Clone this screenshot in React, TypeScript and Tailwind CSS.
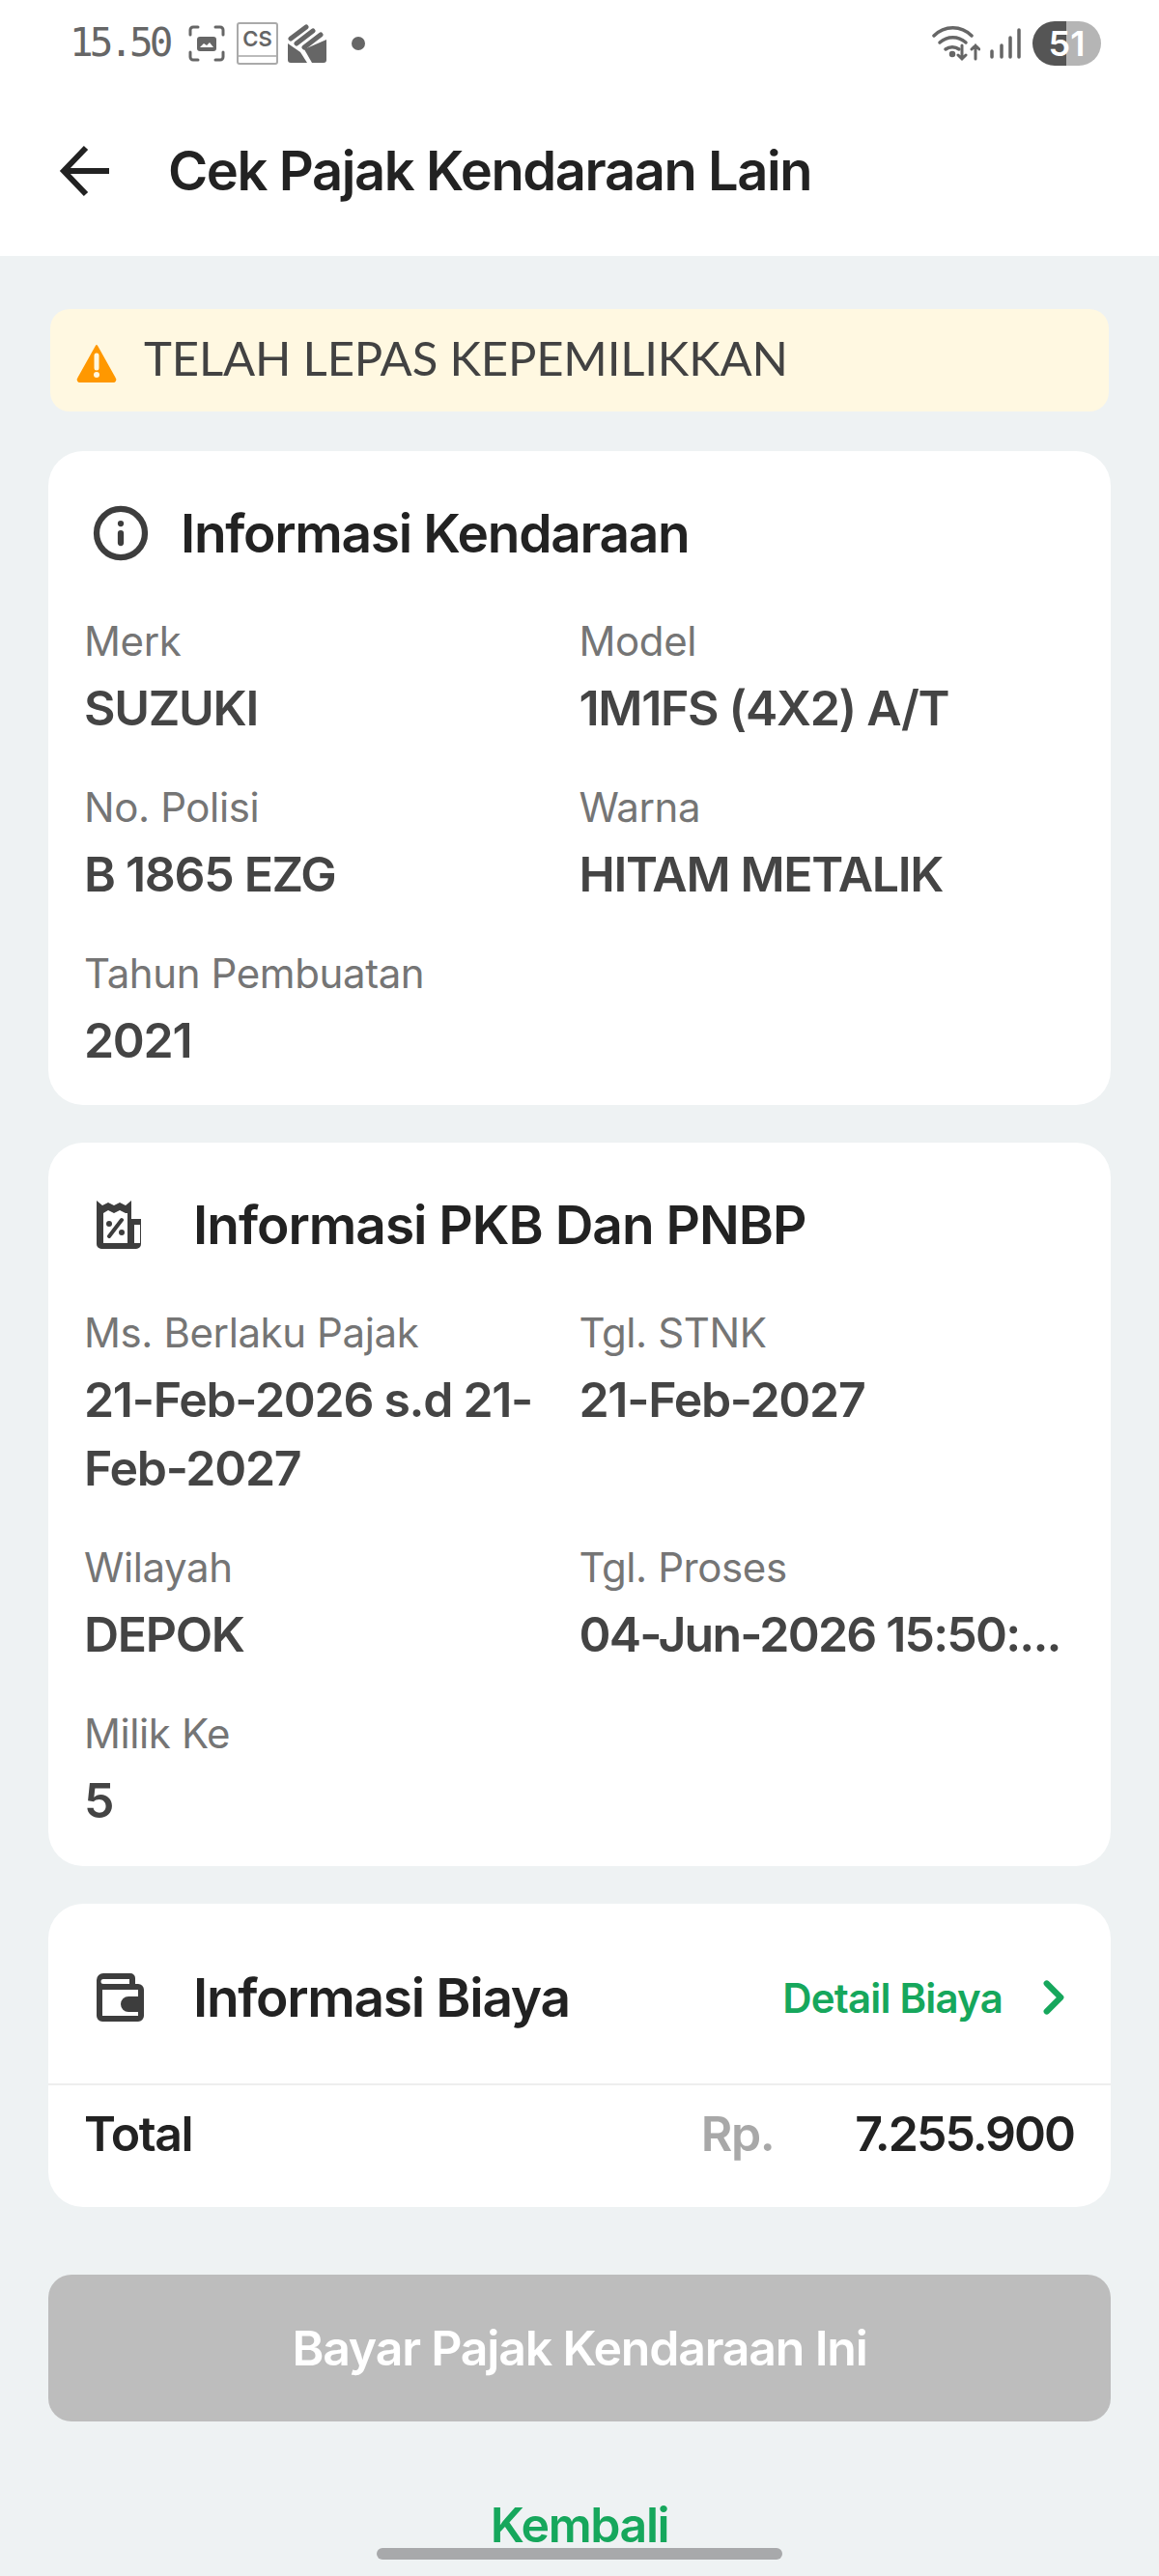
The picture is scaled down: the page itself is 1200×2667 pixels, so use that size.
import React from 'react';
import { ChevronRight, Info } from 'lucide-react';

const Field = ({ label, value, tight }: { label: string; value: string; tight?: boolean }) => (
  <div className="min-w-0">
    <div className="text-[42px] leading-[64px] tracking-[-0.4px] text-[#757575]">{label}</div>
    <div className={`mt-[2px] text-[50px] leading-[71px] font-semibold text-[#444444] ${tight ? 'tracking-[-1.8px]' : 'tracking-[-1.3px]'}`}>{value}</div>
  </div>
);

const StatusBar = () => (
  <div className="h-[90px] flex items-center justify-between pl-[72px] pr-[60px] text-[#666666]">
    <div className="flex items-center">
      <span className="-mt-[2px] text-[41px] leading-none font-['DejaVu_Sans_Mono',monospace] tracking-[-4px] w-[108px]">15.50</span>
      <svg width="38" height="38" viewBox="0 0 38 38" fill="none" className="ml-[15px]">
        <path d="M2 10V5a3 3 0 0 1 3-3h5M28 2h5a3 3 0 0 1 3 3v5M36 28v5a3 3 0 0 1-3 3h-5M10 36H5a3 3 0 0 1-3-3v-5" stroke="#666" strokeWidth="3" strokeLinecap="round" />
        <rect x="9" y="12" width="20" height="15" rx="3" fill="#666" />
        <path d="M12 23l4-4 3 2 3-3 4 5z" fill="#fff" />
      </svg>
      <div className="ml-[12px] w-[43px] h-[44px] border-2 border-[#aaaaaa] rounded-[3px] flex flex-col">
        <span className="h-[32px] text-[22px] leading-[30px] text-center font-semibold font-['Inter',sans-serif] text-[#666666]">CS</span>
        <span className="border-t-2 border-[#bbbbbb]" />
      </div>
      <svg width="40" height="40" viewBox="0 0 40 40" className="ml-[10px]">
        <path d="M0 20l13 9 7 11H3a3 3 0 0 1-3-3z" fill="#666" />
        <path d="M40 16v21a3 3 0 0 1-3 3H25l-8-14z" fill="#666" />
        <path d="M3 15L19 3M9 20L26 7M17 24L34 11" stroke="#666" strokeWidth="5" strokeLinecap="round" />
      </svg>
      <div className="ml-[26px] w-[14px] h-[14px] rounded-full bg-[#666666]" />
    </div>
    <div className="flex items-center">
      <svg width="50" height="38" viewBox="0 0 50 38" fill="none" stroke="#666" strokeWidth="3.5" strokeLinecap="round" className="mt-[2px]">
        <path d="M2 10C13-1 30-1 41 10" />
        <path d="M8 17c8-7 19-7 27 0" />
        <path d="M14 24c4-3 10-3 14 0" />
        <circle cx="21" cy="29" r="1.5" fill="#666" />
        <path d="M31 20v14M27 30l4 4 4-4M45 34V20M41 24l4-4 4 4" strokeWidth="3" />
      </svg>
      <svg width="32" height="32" viewBox="0 0 32 32" fill="none" stroke="#666" strokeWidth="3.5" strokeLinecap="round" className="ml-[10px]">
        <path d="M2 24v6M12 18v12M21 10v20M30 2v28" />
      </svg>
      <div className="ml-[12px] w-[71px] h-[46px] rounded-full overflow-hidden flex relative">
        <div className="w-[35px] bg-[#555555]" />
        <div className="flex-1 bg-[#b5b5b5]" />
        <span className="absolute inset-0 flex items-center justify-center text-[36px] font-semibold text-white font-['Inter',sans-serif]">51</span>
      </div>
    </div>
  </div>
);

export default function App() {
  return (
    <div className="relative w-[1200px] h-[2667px] overflow-hidden bg-[#eef2f3] font-['Inter',sans-serif]">
      <div className="bg-white h-[265px]">
        <StatusBar />
        <div className="h-[175px] flex items-start pt-[51px] pl-[60px]">
          <svg width="54" height="54" viewBox="0 0 54 54" fill="none" stroke="#222222" strokeWidth="6" className="shrink-0 mt-[9px]">
            <path d="M53 27H8M29 3L6 27l23 24" />
          </svg>
          <h1 className="ml-[60px] text-[56px] leading-[72px] font-semibold tracking-[-1.4px] text-[#222222]">Cek Pajak Kendaraan Lain</h1>
        </div>
      </div>

      <div className="px-[50px] pt-[55px] flex flex-col">
        {/* Status banner */}
        <div className="mx-[2px] h-[106px] rounded-[20px] bg-[#fff8e1] flex items-center pl-[27px]">
          <svg width="42" height="40" viewBox="0 0 42 40" className="mt-[6px]">
            <path d="M21 2L40 36a2 2 0 0 1-2 3H4a2 2 0 0 1-2-3z" fill="#ff9800" stroke="#ff9800" strokeWidth="2" strokeLinejoin="round" />
            <path d="M21 12v13" stroke="#fff8e1" strokeWidth="5" strokeLinecap="round" />
            <circle cx="21" cy="32" r="3" fill="#fff8e1" />
          </svg>
          <span className="ml-[28px] -mt-[4px] text-[49px] tracking-[-0.15px] text-[#424242] font-['Lato',sans-serif]">TELAH LEPAS KEPEMILIKKAN</span>
        </div>

        {/* Informasi Kendaraan */}
        <section className="mt-[41px] rounded-[36px] bg-white h-[677px] px-[38px]">
          <div className="h-[170px] flex items-center">
            <Info size={60} strokeWidth={2.5} className="text-[#3d3d3d] ml-[7px]" />
            <h2 className="ml-[32px] text-[55px] font-semibold tracking-[-1.3px] text-[#222222]">Informasi Kendaraan</h2>
          </div>
          <div className="grid grid-cols-2 gap-y-[35px] -mt-[5px] -ml-[1px]">
            <Field label="Merk" value="SUZUKI" />
            <Field label="Model" value="1M1FS (4X2) A/T" />
            <Field label="No. Polisi" value="B 1865 EZG" />
            <Field label="Warna" value="HITAM METALIK" />
            <Field label="Tahun Pembuatan" value="2021" />
          </div>
        </section>

        {/* Informasi PKB */}
        <section className="mt-[39px] rounded-[36px] bg-white h-[749px] px-[38px]">
          <div className="h-[170px] flex items-center">
            <svg width="52" height="52" viewBox="0 0 52 52" className="ml-[11px]">
              <path d="M1 1l6 5 6-3 6 3 6-3 6 3 6-5v19h10v26a5 5 0 0 1-5 5H6a5 5 0 0 1-5-5z" fill="#3d3d3d" />
              <path d="M8 14l5-3 6 3 6-3 6 3h2v31H8z" fill="#fff" />
              <rect x="40" y="26" width="6" height="19" fill="#fff" />
              <path d="M14 38l13-17" stroke="#3d3d3d" strokeWidth="4" strokeLinecap="round" />
              <circle cx="14" cy="25" r="3" fill="#3d3d3d" />
              <circle cx="27" cy="34" r="3" fill="#3d3d3d" />
            </svg>
            <h2 className="ml-[49px] text-[55px] font-semibold tracking-[-1px] text-[#222222]">Informasi PKB Dan PNBP</h2>
          </div>
          <div className="grid grid-cols-2 gap-y-[35px] -mt-[5px] -ml-[1px]">
            <Field label="Ms. Berlaku Pajak" value="21-Feb-2026 s.d 21-Feb-2027" />
            <Field label="Tgl. STNK" value="21-Feb-2027" />
            <Field label="Wilayah" value="DEPOK" />
            <Field label="Tgl. Proses" value="04-Jun-2026 15:50:..." tight />
            <Field label="Milik Ke" value="5" />
          </div>
        </section>

        {/* Informasi Biaya */}
        <section className="mt-[39px] rounded-[36px] bg-white h-[314px]">
          <div className="h-[188px] flex items-center border-b-2 border-[#eeeeee] pl-[50px] pr-[30px] pt-[8px]">
            <svg width="50" height="50" viewBox="0 0 50 50" className="shrink-0">
              <path d="M7 0h28a5 5 0 0 1 5 5v6h3a6 6 0 0 1 6 6v27a6 6 0 0 1-6 6H6a6 6 0 0 1-6-6V7a7 7 0 0 1 7-7z" fill="#3d3d3d" />
              <path d="M7 6h27v5H7a2.500 2.500 0 0 1 0-5zM6 17h37v7H33a8 8 0 0 0 0 16h10v4H6z" fill="#fff" />
            </svg>
            <h2 className="ml-[50px] text-[55px] font-semibold tracking-[-1.3px] text-[#222222]">Informasi Biaya</h2>
            <span className="ml-auto text-[42px] font-semibold tracking-[-0.8px] text-[#16a75c]">Detail Biaya</span>
            <ChevronRight size={58} strokeWidth={2.6} className="ml-[24px] text-[#16a75c]" />
          </div>
          <div className="flex items-center h-[100px] px-[38px] text-[50px] font-semibold tracking-[-1.4px] text-[#222222]">
            <span className="-ml-[1px]">Total</span>
            <span className="ml-auto text-[#a8a8a8]">Rp.</span>
            <span className="ml-[84px] tracking-[-2px]">7.255.900</span>
          </div>
        </section>

        <button className="mt-[70px] h-[152px] rounded-[24px] bg-[#bdbdbd] text-[50px] font-semibold tracking-[-1.2px] text-white">Bayar Pajak Kendaraan Ini</button>

        <div className="mt-[72px] text-center text-[50px] leading-[70px] font-semibold tracking-[-1.4px] text-[#16a75c]">Kembali</div>
      </div>

      {/* Gesture bar */}
      <div className="absolute left-[390px] top-[2638px] w-[420px] h-[12px] rounded-full bg-[#a8a9ab]" />
    </div>
  );
}
